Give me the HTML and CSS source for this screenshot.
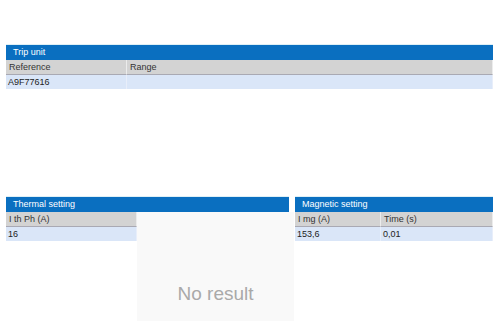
FILE: index.html
```html
<!DOCTYPE html>
<html>
<head>
<meta charset="utf-8">
<link rel="stylesheet" href="styles.css">
</head>
<body>
<div class="page">
  <section class="trip">
    <div class="bar">Trip unit</div>
    <div class="grid trip-grid">
      <div class="th">Reference</div>
      <div class="th">Range</div>
      <div class="td">A9F77616</div>
      <div class="td"></div>
    </div>
  </section>
  <div class="bottom">
    <section class="thermal">
      <div class="bar thermal-bar">Thermal setting</div>
      <div class="thermal-body">
        <div class="grid thermal-grid">
          <div class="th">I th Ph (A)</div>
          <div class="td">16</div>
        </div>
        <div class="panel">No result</div>
      </div>
    </section>
    <section class="magnetic">
      <div class="bar">Magnetic setting</div>
      <div class="grid mag-grid">
        <div class="th">I mg (A)</div>
        <div class="th">Time (s)</div>
        <div class="td">153,6</div>
        <div class="td">0,01</div>
      </div>
    </section>
  </div>
</div>
</body>
</html>
```
FILE: styles.css
```css
html, body {
  margin: 0;
  padding: 0;
  background: #ffffff;
  font-family: "Liberation Sans", Arial, sans-serif;
  font-size: 9px;
  color: #222;
  overflow: hidden;
  height: 321px;
}
.page {
  padding: 45px 2px 0 6px;
}
.bar {
  height: 15px;
  line-height: 15px;
  background: #0a6fc0;
  color: #ffffff;
  padding-left: 7px;
  box-shadow: 0 -1px 0 #dff0f6;
}
.grid {
  display: grid;
}
.trip-grid {
  grid-template-columns: 121px 1fr;
}
.thermal-grid {
  grid-template-columns: 131px;
  align-content: start;
}
.mag-grid {
  grid-template-columns: 86px 1fr;
}
.th {
  height: 14px;
  line-height: 15px;
  background: #d3d3d3;
  border-bottom: 1px solid #a9a9b3;
  border-right: 1px solid #ececec;
  padding-left: 3px;
  color: #333;
}
.td {
  height: 14px;
  line-height: 14px;
  background: #dae6f8;
  border-right: 1px solid #e8eefa;
  padding-left: 2px;
  color: #222;
}
.bottom {
  display: flex;
  margin-top: 108px;
}
.thermal {
  width: 288px;
  display: flex;
  flex-direction: column;
}
.thermal-bar {
  margin-right: 5px;
}
.thermal-body {
  display: flex;
}
.panel {
  flex: 1;
  height: 120px;
  background: #f9f9f9;
  color: #a9a9a9;
  font-size: 19px;
  text-align: center;
  padding-top: 71px;
  box-sizing: border-box;
}
.magnetic {
  flex: 1;
  margin-left: 1px;
}
```
